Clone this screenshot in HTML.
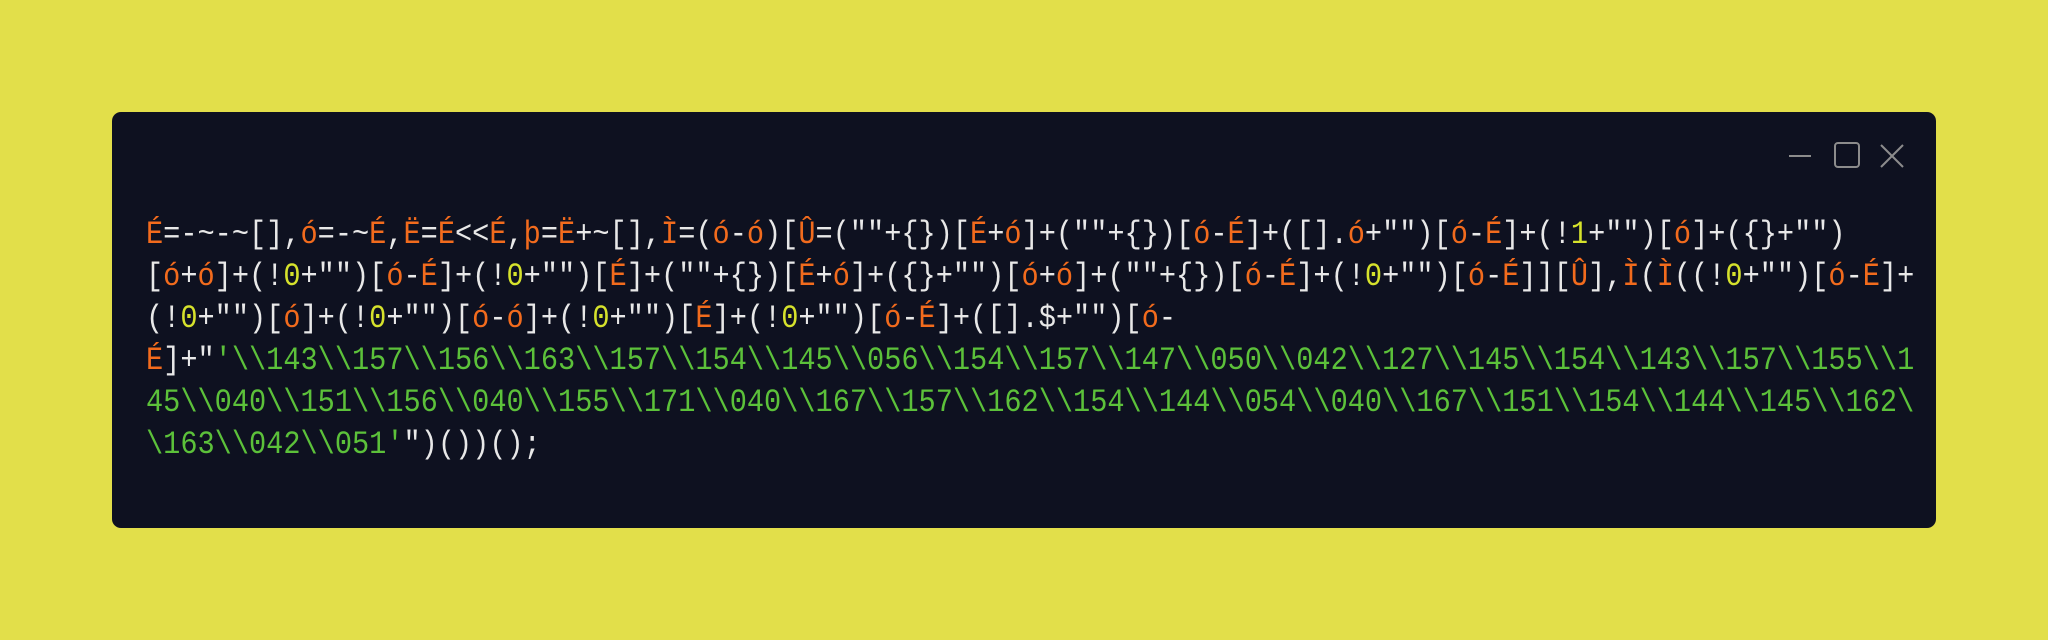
<!DOCTYPE html>
<html><head><meta charset="utf-8"><style>
html,body{margin:0;padding:0}
body{width:2048px;height:640px;background:#e2df4a;position:relative;overflow:hidden}
.win{position:absolute;left:112px;top:112px;width:1824px;height:416px;background:#0e1120;border-radius:9px}
pre{position:absolute;left:34px;top:102px;margin:0;font-family:"Liberation Mono",monospace;font-size:32px;line-height:42px;color:#e8e8e8;white-space:pre;transform:scaleX(0.894);transform-origin:0 0}
.o{color:#f26b1d}.y{color:#d6e22c}.g{color:#5cc13a}
svg{position:absolute;left:0;top:0}
</style></head><body>
<div class="win">
<svg width="1824" height="416"><g stroke="#8c8c8c" stroke-width="2" fill="none">
<line x1="1677" y1="44" x2="1699" y2="44"/>
<rect x="1723" y="31" width="24" height="24" rx="3"/>
<line x1="1769" y1="33" x2="1791" y2="55"/><line x1="1791" y1="33" x2="1769" y2="55"/>
</g></svg>
<pre><span class="o">É</span>=-~-~[],<span class="o">ó</span>=-~<span class="o">É</span>,<span class="o">Ë</span>=<span class="o">É</span>&lt;&lt;<span class="o">É</span>,<span class="o">þ</span>=<span class="o">Ë</span>+~[],<span class="o">Ì</span>=(<span class="o">ó</span>-<span class="o">ó</span>)[<span class="o">Û</span>=(""+{})[<span class="o">É</span>+<span class="o">ó</span>]+(""+{})[<span class="o">ó</span>-<span class="o">É</span>]+([].<span class="o">ó</span>+"")[<span class="o">ó</span>-<span class="o">É</span>]+(!<span class="y">1</span>+"")[<span class="o">ó</span>]+({}+"")
[<span class="o">ó</span>+<span class="o">ó</span>]+(!<span class="y">0</span>+"")[<span class="o">ó</span>-<span class="o">É</span>]+(!<span class="y">0</span>+"")[<span class="o">É</span>]+(""+{})[<span class="o">É</span>+<span class="o">ó</span>]+({}+"")[<span class="o">ó</span>+<span class="o">ó</span>]+(""+{})[<span class="o">ó</span>-<span class="o">É</span>]+(!<span class="y">0</span>+"")[<span class="o">ó</span>-<span class="o">É</span>]][<span class="o">Û</span>],<span class="o">Ì</span>(<span class="o">Ì</span>((!<span class="y">0</span>+"")[<span class="o">ó</span>-<span class="o">É</span>]+
(!<span class="y">0</span>+"")[<span class="o">ó</span>]+(!<span class="y">0</span>+"")[<span class="o">ó</span>-<span class="o">ó</span>]+(!<span class="y">0</span>+"")[<span class="o">É</span>]+(!<span class="y">0</span>+"")[<span class="o">ó</span>-<span class="o">É</span>]+([].$+"")[<span class="o">ó</span>-
<span class="o">É</span>]+"<span class="g">'\\143\\157\\156\\163\\157\\154\\145\\056\\154\\157\\147\\050\\042\\127\\145\\154\\143\\157\\155\\1</span>
<span class="g">45\\040\\151\\156\\040\\155\\171\\040\\167\\157\\162\\154\\144\\054\\040\\167\\151\\154\\144\\145\\162\</span>
<span class="g">\163\\042\\051'</span>")())();</pre>
</div>
</body></html>
